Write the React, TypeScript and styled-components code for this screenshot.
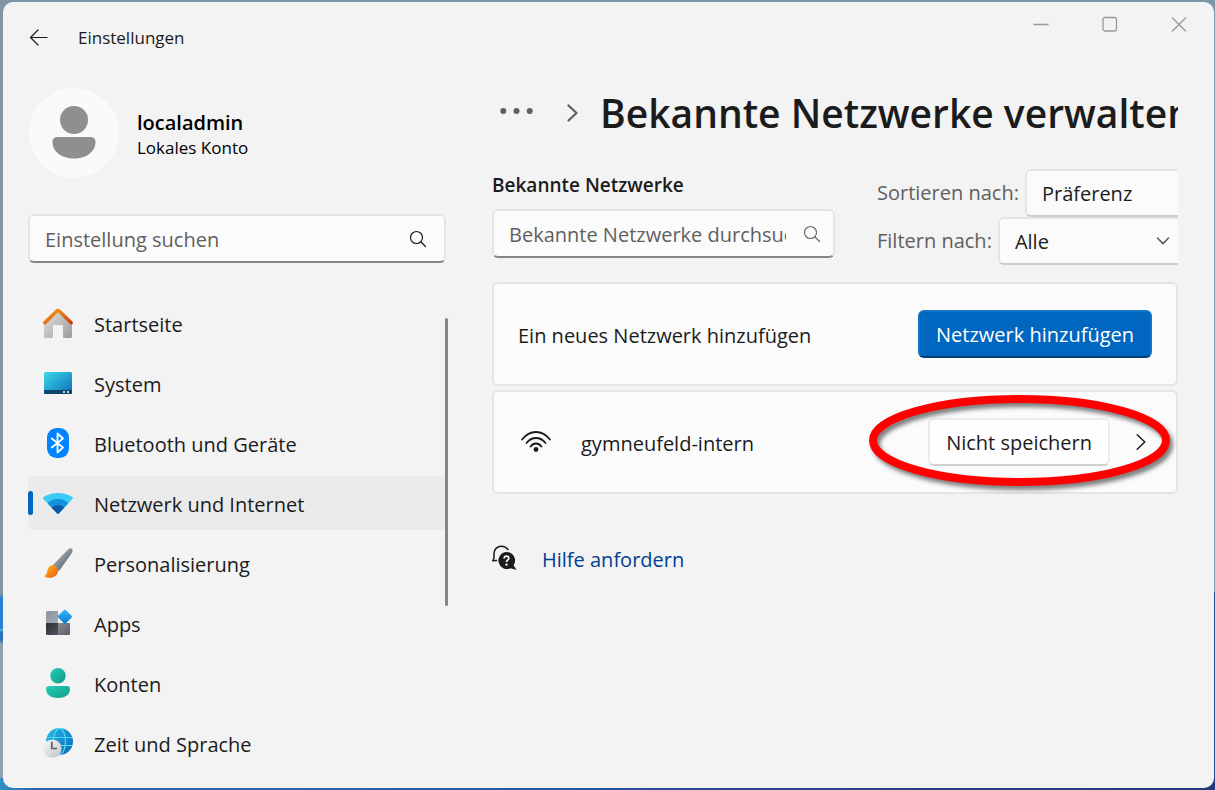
import React, { useState } from "react";
import styled, { createGlobalStyle, css } from "styled-components";

const GlobalStyle = createGlobalStyle`
  * { box-sizing: border-box; }
  body { margin: 0; font-family: "Open Sans", "Noto Sans", sans-serif; font-size: 20px; line-height: 28px; color: #1b1b1b; }
  button, input, select { font: inherit; color: inherit; margin: 0; }
  h1, h2, p, ul { margin: 0; padding: 0; }
  ul { list-style: none; }
  svg { display: block; flex: none; }
`;

const Desktop = styled.div`
  min-height: 100vh;
  display: flex;
  padding: 2px 1px 2px 3px;
  background:
    linear-gradient(90deg, #2f8fc6, #2c62ac 3%, #2a5ca8 40%, #26468c 60%, #223a7c) left bottom / 100% 12px no-repeat,
    linear-gradient(180deg, #7f96a8 0, #7f96a8 592px, #25509a 592px) right top / 12px 100% no-repeat,
    linear-gradient(180deg, #8195a6 0, #8195a6 594px, #2f7fd0 598px, #2f7fd0 628px, #5fb6d8 630px, #2f6fc0 632px, #2f6fc0 640px, #8fa0ae 644px) left top / 12px 100% no-repeat,
    #7c97a9;
`;

const Window = styled.div`
  flex: 1;
  min-width: 0;
  display: flex;
  flex-direction: column;
  background: #f3f3f3;
  border-radius: 10px;
  overflow: hidden;
`;

const TitleBar = styled.header`
  display: flex;
  justify-content: space-between;
  align-items: flex-start;
`;

const TitleStart = styled.div`
  display: flex;
  align-items: center;
  gap: 21px;
  height: 72px;
  padding-left: 18px;
  font-size: 17px;
`;

const IconButton = styled.button`
  display: flex;
  align-items: center;
  justify-content: center;
  padding: 0;
  border: 0;
  background: none;
`;

const BackButton = styled(IconButton)`
  width: 36px;
  height: 36px;
`;

const WindowControls = styled.div`
  display: flex;
  padding-right: 1px;
  button { width: 69px; height: 44px; }
`;

const Body = styled.div`
  flex: 1;
  display: flex;
  gap: 44px;
  padding: 0 36px 16px 25px;
`;

const Sidebar = styled.aside`
  width: 420px;
  flex: none;
  padding-top: 14px;
`;

const Profile = styled.div`
  display: flex;
  align-items: center;
  gap: 18px;
  padding-left: 1px;
  color: #000;
`;

const ProfileText = styled.div`
  padding-top: 3px;
`;

const ProfileName = styled.p`
  font-weight: 600;
  line-height: 26px;
`;

const ProfileKind = styled.p`
  font-size: 17px;
  line-height: 24px;
`;

const SearchField = styled.label<{ $pale?: boolean }>`
  display: flex;
  align-items: center;
  height: 49px;
  padding: 0 ${(p) => (p.$pale ? 10 : 15)}px 0 15px;
  gap: 15px;
  background: #fbfbfb;
  border: 2px solid #e5e5e5;
  border-bottom-color: #868686;
  border-radius: 6px;
  color: ${(p) => (p.$pale ? "#6a6a6a" : "#1b1b1b")};
  input {
    flex: 1;
    min-width: 0;
    padding: 2px 0 0;
    height: 32px;
    border: 0;
    outline: 0;
    background: none;
  }
  input::placeholder { color: #5f5f5f; opacity: 1; }
`;

const SidebarSearch = styled(SearchField)`
  margin-top: 36px;
  margin-right: 2px;
`;

const NavArea = styled.nav`
  display: flex;
  align-items: flex-start;
  margin-top: 33px;
`;

const NavList = styled.ul`
  flex: 1;
  display: flex;
  flex-direction: column;
  gap: 6px;
`;

const NavLink = styled.a<{ $active?: boolean }>`
  display: flex;
  align-items: center;
  gap: 21px;
  height: 54px;
  padding-left: 15px;
  color: inherit;
  text-decoration: none;
  border-radius: 6px 0 0 6px;
  span { padding-top: 3px; }
  ${(p) =>
    p.$active &&
    css`
      padding-left: 0;
      background: #eaeaea;
      &::before {
        content: "";
        width: 5px;
        height: 24px;
        margin-right: -11px;
        border-radius: 3px;
        background: #0067c0;
      }
    `}
`;

const ScrollThumb = styled.div`
  width: 3px;
  height: 288px;
  margin-top: 22px;
  border-radius: 2px;
  background: #868686;
`;

const Main = styled.main`
  flex: 1;
  min-width: 0;
  padding-top: 9px;
`;

const Breadcrumb = styled.div`
  display: flex;
  align-items: center;
  overflow: hidden;
  height: 60px;
  padding-left: 7px;
`;

const PageTitle = styled.h1`
  margin-left: 19px;
  font-size: 39px;
  line-height: 60px;
  font-weight: 600;
  white-space: nowrap;
`;

const CrumbMenu = styled(IconButton)`
  width: 36px;
  height: 36px;
  margin-right: 28px;
`;

const Filters = styled.div`
  display: flex;
  gap: 42px;
  overflow: hidden;
  padding-top: 26px;
`;

const KnownNetworks = styled.div`
  flex: 0 0 343px;
`;

const SectionTitle = styled.h2`
  font-size: 19px;
  line-height: 32px;
  font-weight: 600;
  margin-bottom: 8px;
`;

const Sorting = styled.div`
  flex: 1;
  min-width: 0;
`;

const SelectRow = styled.div`
  display: flex;
  align-items: center;
  gap: 6px;
  height: 48px;
  color: #5f5f5f;
  white-space: nowrap;
`;

const SelectBox = styled.div`
  flex: none;
  display: grid;
  align-items: center;
  width: 194px;
  > * { grid-area: 1 / 1; }
  svg { justify-self: end; margin-right: 22px; pointer-events: none; }
  select {
    appearance: none;
    width: 100%;
    height: 48px;
    padding: 2px 48px 0 15px;
    background: #fbfbfb;
    border: 2px solid #e5e5e5;
    border-bottom-color: #cccccc;
    border-radius: 6px;
    color: #1b1b1b;
  }
`;

const Cards = styled.div`
  display: flex;
  flex-direction: column;
  gap: 4px;
  margin-top: 17px;
`;

const Card = styled.section`
  position: relative;
  display: flex;
  align-items: center;
  height: 104px;
  padding: 0 24px;
  background: #fbfbfb;
  border: 2px solid #e5e5e5;
  border-radius: 6px;
`;

const CardLabel = styled.span`
  flex: 1;
  padding-top: 3px;
`;

const NetworkName = styled(CardLabel)`
  margin-left: 27px;
`;

const Button = styled.button<{ $primary?: boolean }>`
  height: 48px;
  padding: 2px 16px 0;
  border-radius: 6px;
  white-space: nowrap;
  background: #fefefe;
  border: 2px solid #ececec;
  border-bottom-color: #d0d0d0;
  ${(p) =>
    p.$primary &&
    css`
      color: #fff;
      background: #0067c0;
      border-color: #1473c5;
      border-bottom-color: #003e73;
    `}
`;

const DetailsButton = styled(IconButton)`
  width: 22px;
  height: 48px;
  margin-left: 20px;
`;

const Highlight = styled.svg`
  position: absolute;
  top: 3px;
  right: 6px;
  overflow: visible;
  pointer-events: none;
  filter: drop-shadow(3px 4px 2px rgba(0, 0, 0, 0.5));
`;

const HelpLink = styled.a`
  display: inline-flex;
  align-items: center;
  gap: 25px;
  margin-top: 49px;
  height: 30px;
  color: #003e92;
  text-decoration: none;
  span { padding-top: 3px; }
`;

const SearchIcon = () => (
  <svg width="22" height="22" viewBox="0 0 22 22" fill="none" stroke="currentColor" strokeWidth="1.2" strokeLinecap="round">
    <circle cx="9.500" cy="9.500" r="6" />
    <path d="M14 14 18.500 18.500" />
  </svg>
);

const ChevronDown = () => (
  <svg width="14" height="10" viewBox="0 0 14 10" fill="none" stroke="#5f5f5f" strokeWidth="1.6" strokeLinecap="round" strokeLinejoin="round">
    <path d="M1.5 2 7 7.6 12.5 2" />
  </svg>
);

const HomeIcon = () => (
  <svg width="30" height="30" viewBox="0 0 30 30">
    <defs>
      <linearGradient id="wall" x1="0" y1="0" x2="1" y2="1"><stop stopColor="#e4e4e4" /><stop offset="1" stopColor="#9b9b9b" /></linearGradient>
      <linearGradient id="roof" x1="0" y1="0" x2="1" y2="1"><stop stopColor="#f9a11b" /><stop offset="1" stopColor="#cf3f0a" /></linearGradient>
    </defs>
    <path d="M1 13 15 2 29 13V28.500Q29 30 27.500 30H21.500Q20 30 20 28.500V18Q20 17 19 17H11Q10 17 10 18V28.500Q10 30 8.500 30H2.500Q1 30 1 28.500Z" fill="url(#wall)" />
    <path d="M1.800 14.800 13.500 3.200Q15 1.800 16.500 3.200L28.200 14.800" fill="none" stroke="url(#roof)" strokeWidth="3.400" strokeLinecap="round" />
  </svg>
);

const SystemIcon = () => (
  <svg width="30" height="30" viewBox="0 0 30 30">
    <defs><linearGradient id="screen" x1="0" y1="0" x2="1" y2="1"><stop stopColor="#3fdbe2" /><stop offset=".5" stopColor="#23a3d2" /><stop offset="1" stopColor="#1266b4" /></linearGradient></defs>
    <rect x="1" y="4" width="28" height="22" rx="1.500" fill="url(#screen)" />
    <path d="M1 22H29V24.500Q29 26 27.500 26H2.500Q1 26 1 24.500Z" fill="#0d4668" />
    <path d="M20 23h2v2h-2zM24 23h2v2h-2z" fill="#b8d7e6" />
  </svg>
);

const BluetoothIcon = () => (
  <svg width="30" height="30" viewBox="0 0 30 30">
    <rect x="4" y="0" width="22" height="30" rx="9.500" fill="#0083fe" />
    <path d="M8.800 10.500 20 19.500 14.500 24.500V5.500L20 10.500 8.800 19.500" fill="none" stroke="#fff" strokeWidth="1.800" strokeLinejoin="round" strokeLinecap="round" />
  </svg>
);

const NetworkIcon = () => (
  <svg width="30" height="30" viewBox="0 0 30 30">
    <defs><clipPath id="fan"><path d="M0 10.500Q-.4 9.600.6 9Q7 5 15 5T29.400 9Q30.400 9.600 29.700 10.500L15.800 25.500Q15 26.200 14.200 25.500Z" /></clipPath></defs>
    <g clipPath="url(#fan)">
      <rect width="30" height="30" fill="#3ccbf4" />
      <circle cx="15" cy="26" r="15" fill="#1490df" />
      <circle cx="15" cy="26" r="9" fill="#0c59a4" />
    </g>
  </svg>
);

const BrushIcon = () => (
  <svg width="30" height="30" viewBox="0 0 30 30">
    <defs>
      <linearGradient id="handle" x1="0" y1="0" x2="1" y2="1"><stop offset=".2" stopColor="#a9b2ba" /><stop offset=".8" stopColor="#5e666d" /></linearGradient>
      <linearGradient id="bristle" x1="0" y1="0" x2="1" y2="1"><stop stopColor="#fcc419" /><stop offset="1" stopColor="#ed5314" /></linearGradient>
    </defs>
    <path d="M9.500 17.500 24.500 2Q27 -.5 29.200.8Q30.200 2.800 28.200 6L16 23Z" fill="url(#handle)" />
    <path d="M9.500 17.300Q13.500 18 15.200 22.500C15 27.500 10.500 30.200 5.500 29.700Q2.500 29.500 1.200 28.300Q4 26.800 4.200 23.800C4.500 20 6.500 17.500 9.500 17.300Z" fill="url(#bristle)" />
  </svg>
);

const AppsIcon = () => (
  <svg width="30" height="30" viewBox="0 0 30 30">
    <defs>
      <linearGradient id="tileA" x1="0" y1="0" x2="1" y2="1"><stop stopColor="#8c959d" /><stop offset="1" stopColor="#a2abb3" /></linearGradient>
      <linearGradient id="tileB" x1="0" y1="0" x2="1" y2="1"><stop stopColor="#2c2f31" /><stop offset="1" stopColor="#50565b" /></linearGradient>
      <linearGradient id="tileC" x1="0" y1="0" x2="1" y2="1"><stop stopColor="#868c93" /><stop offset="1" stopColor="#5b6066" /></linearGradient>
      <linearGradient id="tileD" x1="0" y1="0" x2="1" y2="1"><stop stopColor="#35bdf4" /><stop offset="1" stopColor="#0877d4" /></linearGradient>
    </defs>
    <path d="M4.500 3H15V15H3V4.500Q3 3 4.500 3Z" fill="url(#tileA)" />
    <path d="M3 15H15V27H4.500Q3 27 3 25.500Z" fill="url(#tileB)" />
    <path d="M15 15H27V25.500Q27 27 25.500 27H15Z" fill="url(#tileC)" />
    <rect x="16.500" y="3.300" width="10.800" height="10.800" rx="1.200" transform="rotate(45 21.900 8.700)" fill="url(#tileD)" />
  </svg>
);

const AccountIcon = () => (
  <svg width="30" height="30" viewBox="0 0 30 30">
    <defs><linearGradient id="teal" x1="0" y1="0" x2="1" y2="1"><stop stopColor="#27cdb9" /><stop offset="1" stopColor="#109b84" /></linearGradient></defs>
    <circle cx="15" cy="7.700" r="7.700" fill="url(#teal)" />
    <path d="M6 18H24Q27 18 27 21C27 27 21.500 30 15 30S3 27 3 21Q3 18 6 18Z" fill="url(#teal)" />
  </svg>
);

const TimeIcon = () => (
  <svg width="30" height="30" viewBox="0 0 30 30">
    <defs>
      <linearGradient id="globe" x1="0" y1="0" x2="1" y2="1"><stop stopColor="#28bde2" /><stop offset="1" stopColor="#0a63bd" /></linearGradient>
      <linearGradient id="dial" x1="0" y1="0" x2="1" y2="1"><stop stopColor="#fafafa" /><stop offset="1" stopColor="#bfc3c6" /></linearGradient>
    </defs>
    <circle cx="16.500" cy="13.500" r="13.500" fill="url(#globe)" />
    <g fill="none" stroke="#4fdcf0" strokeWidth="1.200">
      <ellipse cx="16.500" cy="13.500" rx="6" ry="13.200" />
      <path d="M4.500 9.500H29.200M4.500 17.500H29.200" />
    </g>
    <circle cx="9.300" cy="20.700" r="9.300" fill="url(#dial)" />
    <path d="M8.800 13.800V20.500H14" fill="none" stroke="#5b5f63" strokeWidth="1.700" />
  </svg>
);

const navItems = [
  { label: "Startseite", icon: <HomeIcon /> },
  { label: "System", icon: <SystemIcon /> },
  { label: "Bluetooth und Geräte", icon: <BluetoothIcon /> },
  { label: "Netzwerk und Internet", icon: <NetworkIcon />, active: true },
  { label: "Personalisierung", icon: <BrushIcon /> },
  { label: "Apps", icon: <AppsIcon /> },
  { label: "Konten", icon: <AccountIcon /> },
  { label: "Zeit und Sprache", icon: <TimeIcon /> },
];

export default function App() {
  const [query, setQuery] = useState("");
  const [networkQuery, setNetworkQuery] = useState("");

  return (
    <>
      <GlobalStyle />
      <Desktop>
        <Window>
          <TitleBar>
            <TitleStart>
              <BackButton aria-label="Zurück">
                <svg width="20" height="18" viewBox="0 0 20 18" fill="none" stroke="#1b1b1b" strokeWidth="1.200" strokeLinecap="round" strokeLinejoin="round">
                  <path d="M18 8.500H1.500M9 1 1.500 8.500 9 16" />
                </svg>
              </BackButton>
              <span>Einstellungen</span>
            </TitleStart>
            <WindowControls>
              <IconButton aria-label="Minimieren">
                <svg width="16" height="16" viewBox="0 0 16 16"><path d="M.5 8.500H15.500" stroke="#999" strokeWidth="1.300" /></svg>
              </IconButton>
              <IconButton aria-label="Maximieren">
                <svg width="16" height="16" viewBox="0 0 16 16"><rect x="1" y="1.500" width="13.500" height="13.500" rx="2" fill="none" stroke="#999" strokeWidth="1.300" /></svg>
              </IconButton>
              <IconButton aria-label="Schließen">
                <svg width="16" height="16" viewBox="0 0 16 16"><path d="M1 1.500 15 15.500M15 1.500 1 15.500" stroke="#999" strokeWidth="1.300" /></svg>
              </IconButton>
            </WindowControls>
          </TitleBar>

          <Body>
            <Sidebar>
              <Profile>
                <svg width="90" height="90" viewBox="0 0 90 90">
                  <circle cx="45" cy="45" r="45" fill="#fafafa" />
                  <circle cx="45" cy="32" r="14" fill="#8f8f8f" />
                  <path d="M28.500 49H61.500Q66.500 49 66.500 54C66.500 64 57 70.500 45 70.500S23.500 64 23.500 54Q23.500 49 28.500 49Z" fill="#8f8f8f" />
                </svg>
                <ProfileText>
                  <ProfileName>localadmin</ProfileName>
                  <ProfileKind>Lokales Konto</ProfileKind>
                </ProfileText>
              </Profile>
              <SidebarSearch>
                <input aria-label="Einstellung suchen" placeholder="Einstellung suchen" value={query} onChange={(e) => setQuery(e.target.value)} />
                <SearchIcon />
              </SidebarSearch>
              <NavArea>
                <NavList>
                  {navItems.map((item) => (
                    <li key={item.label}>
                      <NavLink href="#" $active={item.active}>
                        {item.icon}
                        <span>{item.label}</span>
                      </NavLink>
                    </li>
                  ))}
                </NavList>
                <ScrollThumb />
              </NavArea>
            </Sidebar>

            <Main>
              <Breadcrumb>
                <CrumbMenu aria-label="Weitere Ebenen">
                  <svg width="36" height="10" viewBox="0 0 36 10" fill="#5f5f5f">
                    <circle cx="4.300" cy="3" r="3" /><circle cx="17.500" cy="3" r="3" /><circle cx="30.700" cy="3" r="3" />
                  </svg>
                </CrumbMenu>
                <svg width="18" height="18" viewBox="0 0 18 18" fill="none" stroke="#5f5f5f" strokeWidth="2.200" strokeLinecap="round" strokeLinejoin="round">
                  <path d="M5.500 1.500 13.500 9 5.500 16.500" />
                </svg>
                <PageTitle>Bekannte Netzwerke verwalten</PageTitle>
              </Breadcrumb>

              <Filters>
                <KnownNetworks>
                  <SectionTitle>Bekannte Netzwerke</SectionTitle>
                  <SearchField $pale>
                    <input aria-label="Bekannte Netzwerke durchsuchen" placeholder="Bekannte Netzwerke durchsuchen" value={networkQuery} onChange={(e) => setNetworkQuery(e.target.value)} />
                    <SearchIcon />
                  </SearchField>
                </KnownNetworks>
                <Sorting>
                  <SelectRow>
                    <label htmlFor="sort">Sortieren nach:</label>
                    <SelectBox>
                      <select id="sort"><option>Präferenz</option></select>
                      <ChevronDown />
                    </SelectBox>
                  </SelectRow>
                  <SelectRow>
                    <label htmlFor="filter">Filtern nach:</label>
                    <SelectBox>
                      <select id="filter"><option>Alle</option></select>
                      <ChevronDown />
                    </SelectBox>
                  </SelectRow>
                </Sorting>
              </Filters>

              <Cards>
                <Card>
                  <CardLabel>Ein neues Netzwerk hinzufügen</CardLabel>
                  <Button $primary>Netzwerk hinzufügen</Button>
                </Card>
                <Card>
                  <svg width="36" height="28" viewBox="0 0 36 28" fill="none" stroke="#1b1b1b" strokeWidth="1.800" strokeLinecap="round">
                    <path d="M4 11.500Q10 4 18 4T32 11.500M8.500 15Q12.500 10 18 10T27.500 15M12.500 18.500Q14.800 15.500 18 15.500T23.500 18.500" />
                    <circle cx="18" cy="21.500" r="2.400" fill="#1b1b1b" stroke="none" />
                  </svg>
                  <NetworkName>gymneufeld-intern</NetworkName>
                  <Button>Nicht speichern</Button>
                  <DetailsButton aria-label="Details">
                    <svg width="10" height="18" viewBox="0 0 10 18" fill="none" stroke="#1b1b1b" strokeWidth="1.500" strokeLinecap="round" strokeLinejoin="round">
                      <path d="M1.200 1.800 8.800 9 1.200 16.200" />
                    </svg>
                  </DetailsButton>
                  <Highlight width="301" height="91" viewBox="0 0 301 91">
                    <ellipse cx="150.500" cy="45.500" rx="146.500" ry="41.500" fill="none" stroke="#fe0000" strokeWidth="8" />
                  </Highlight>
                </Card>
              </Cards>

              <HelpLink href="#">
                <svg width="25" height="26" viewBox="0 0 25 26">
                  <path d="M16 4.500Q13.500 1.200 9.500 1.200C5 1.200 2 4.500 2 8.500V13L.8 15.800 4.500 15.500" fill="none" stroke="#1b1b1b" strokeWidth="1.500" strokeLinecap="round" strokeLinejoin="round" />
                  <path d="M14.500 7A8.500 8.500 0 0 1 21.600 20.200L24.500 25 18.500 23.200A8.500 8.500 0 1 1 14.500 7Z" fill="#1b1b1b" />
                  <path d="M12.200 13.500Q12.200 11.200 14.500 11.200T16.800 13.300C16.800 15 14.500 15 14.500 17" fill="none" stroke="#fff" strokeWidth="1.700" />
                  <circle cx="14.500" cy="19.600" r="1.200" fill="#fff" />
                </svg>
                <span>Hilfe anfordern</span>
              </HelpLink>
            </Main>
          </Body>
        </Window>
      </Desktop>
    </>
  );
}
